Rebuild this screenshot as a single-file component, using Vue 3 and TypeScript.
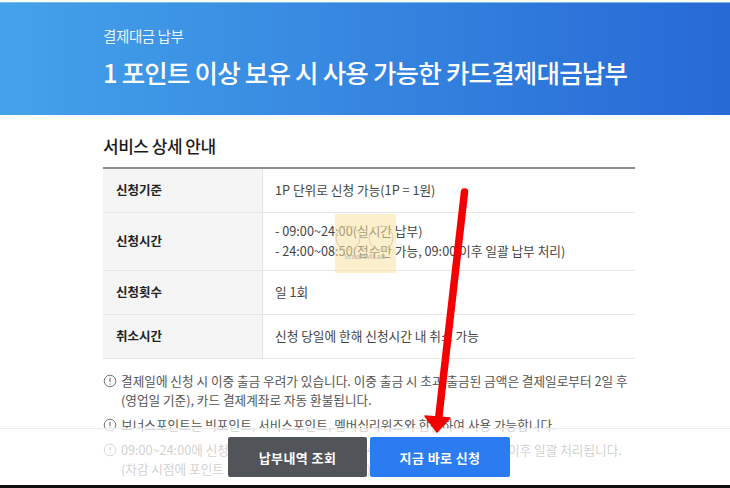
<script setup lang="ts">
interface Row { label: string; lines: string[] }
const rows: Row[] = [
  { label: '신청기준', lines: ['1P 단위로 신청 가능(1P = 1원)'] },
  { label: '신청시간', lines: ['- 09:00~24:00(실시간 납부)', '- 24:00~08:50(접수만 가능, 09:00 이후 일괄 납부 처리)'] },
  { label: '신청횟수', lines: ['일 1회'] },
  { label: '취소시간', lines: ['신청 당일에 한해 신청시간 내 취소 가능'] },
]
const notes: string[][] = [
  ['결제일에 신청 시 이중 출금 우려가 있습니다. 이중 출금 시 초과 출금된 금액은 결제일로부터 2일 후', '(영업일 기준), 카드 결제계좌로 자동 환불됩니다.'],
  ['보너스포인트는 빅포인트, 서비스포인트, 멤버십리워즈와 합산하여 사용 가능합니다.'],
  ['09:00~24:00에 신청 시 실시간으로 처리되며, 24:00~08:50 신청 시 09:00 이후 일괄 처리됩니다.', '(차감 시점에 포인트 부족 시 신청이 취소됩니다.)'],
]
</script>

<template>
  <div class="page">
    <header class="hero">
      <p class="eyebrow">결제대금 납부</p>
      <h1>1 포인트 이상 보유 시 사용 가능한 카드결제대금납부</h1>
    </header>
    <main class="content">
      <h2>서비스 상세 안내</h2>
      <div class="table">
        <div v-for="r in rows" :key="r.label" class="row">
          <div class="th">{{ r.label }}</div>
          <div class="td">
            <p v-for="l in r.lines" :key="l">{{ l }}</p>
          </div>
        </div>
      </div>
      <ul class="notes">
        <li v-for="(n, i) in notes" :key="i">
          <svg class="info" viewBox="0 0 14 14" width="14" height="14">
            <circle cx="7" cy="7" r="5.8" fill="none" stroke="#77797d" stroke-width="1" />
            <path d="M7 3.8v4.200M7 9.400v1.100" fill="none" stroke="#77797d" stroke-width="1.200" />
          </svg>
          <div>
            <p v-for="l in n" :key="l">{{ l }}</p>
          </div>
        </li>
      </ul>
    </main>

    <div class="bottom">
      <div class="actions">
        <button class="btn dark">납부내역 조회</button>
        <button class="btn blue">지금 바로 신청</button>
      </div>
      <div class="strip"></div>
    </div>

    <div class="cursor">
      <svg viewBox="0 0 62 60" width="62" height="60">
        <circle cx="13" cy="24" r="12" fill="none" stroke="#d9cfae" stroke-width="1" />
        <circle cx="46" cy="24" r="12" fill="none" stroke="#d9cfae" stroke-width="1" />
      </svg>
      <span>SmartMLab</span>
    </div>

    <svg class="arrow" viewBox="0 0 730 488" width="730" height="488">
      <path d="M464.500 192 L438 424" fill="none" stroke="#f40000" stroke-width="7.500" stroke-linecap="round" />
      <path d="M425 416 L450 418 L437 432 Z" fill="#f40000" stroke="#f40000" stroke-width="1.500" stroke-linejoin="round" />
    </svg>
  </div>
</template>

<style scoped>
.page {
  position: relative;
  width: 730px;
  height: 488px;
  overflow: hidden;
  background: #fff;
  font-family: "Noto Sans CJK KR", "Noto Sans", sans-serif;
  color: #333;
}
p, h1, h2, ul { margin: 0; padding: 0; }
.hero {
  margin-top: 2px;
  height: 113px;
  box-sizing: border-box;
  padding: 23px 103px 0;
  background: linear-gradient(90deg, #44a2ea 0%, #2769d5 100%);
  border-top: 1px solid #7fb8ec;
  color: #fff;
}
.eyebrow { font-size: 14.500px; line-height: 20px; letter-spacing: -0.4px; color: #eaf4fd; }
h1 {
  margin-top: 9px;
  font-size: 25.500px;
  font-weight: 500;
  line-height: 34px;
  letter-spacing: -0.8px;
  white-space: nowrap;
}
.content { padding: 19px 95px 0 103px; }
h2 { font-size: 17px; font-weight: 500; line-height: 24px; letter-spacing: -0.5px; color: #1c1c1c; }
.table { margin-top: 9px; border-top: 2px solid #8e8e8e; }
.row { display: flex; border-bottom: 1px solid #e6e6e6; }
.row:nth-child(1), .row:nth-child(3), .row:nth-child(4) { height: 43px; }
.row:nth-child(2) { height: 57px; }
.th {
  width: 160px;
  flex: none;
  box-sizing: border-box;
  padding: 0 0 2px 13px;
  display: flex;
  align-items: center;
  background: #f5f5f5;
  border-right: 1px solid #e3e3e3;
  font-size: 12.500px;
  font-weight: 700;
  color: #222;
}
.td {
  flex: 1;
  padding: 0 0 2px 12px;
  display: flex;
  flex-direction: column;
  justify-content: center;
  gap: 2px;
  font-size: 12.700px;
  line-height: 18px;
  color: #444;
  white-space: nowrap;
}
.notes { margin-top: 12px; list-style: none; font-size: 12.650px; line-height: 19px; color: #555; }
.notes li { display: flex; gap: 4px; margin-bottom: 6px; white-space: nowrap; }
.info { flex: none; margin-top: 3px; }
.bottom {
  position: absolute;
  left: 0;
  right: 0;
  bottom: 0;
  height: 59px;
  display: flex;
  flex-direction: column;
  background: rgba(255, 255, 255, 0.72);
  border-top: 1px solid #ececec;
}
.actions { flex: 1; display: flex; justify-content: center; align-items: flex-start; gap: 3px; padding: 8px 0 0 8px; }
.btn {
  width: 140px;
  height: 40px;
  border: none;
  border-radius: 2px;
  color: #fff;
  font-family: inherit;
  font-size: 13px;
  font-weight: 700;
  letter-spacing: 0.4px;
}
.dark { width: 139px; background: #515459; }
.blue { background: #2b7cf0; }
.strip { height: 3px; background: #111; }
.cursor {
  position: absolute;
  left: 335px;
  top: 214px;
  width: 61px;
  height: 59px;
  background: rgba(250, 226, 160, 0.55);
}
.cursor svg { position: absolute; left: 0; top: 0; }
.cursor span {
  position: absolute;
  left: 9px;
  top: 38px;
  font-size: 8px;
  color: #b9b9b4;
  font-family: "Liberation Sans", sans-serif;
}
.arrow { position: absolute; left: 0; top: 0; pointer-events: none; }
</style>
